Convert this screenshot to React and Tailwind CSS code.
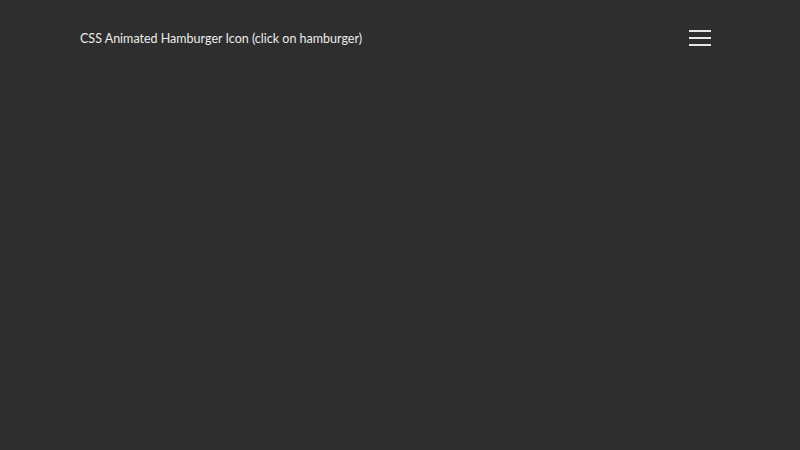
import React, { useState } from "react";

const App = () => {
  const [open, setOpen] = useState(false);

  return (
    <div
      className="w-full min-h-screen bg-[#2e2e2e] text-[#ececec]"
      style={{ fontFamily: "Lato, 'Noto Sans', sans-serif" }}
    >
      <div className="flex items-start justify-between pl-[80px] pr-[89px] pt-[28px]">
        <h1 className="mt-[1px] text-[12.5px] leading-[20px] font-normal">
          CSS Animated Hamburger Icon (click on hamburger)
        </h1>
        <button
          className="mt-[1px] flex flex-col gap-[5px] w-[22px] py-[1px]"
          onClick={() => setOpen(!open)}
        >
          <span className="block h-[2px] w-full bg-[#e6e6e6]" />
          <span className="block h-[2px] w-full bg-[#e6e6e6]" />
          <span className="block h-[2px] w-full bg-[#e6e6e6]" />
        </button>
      </div>
    </div>
  );
};

export default App;
